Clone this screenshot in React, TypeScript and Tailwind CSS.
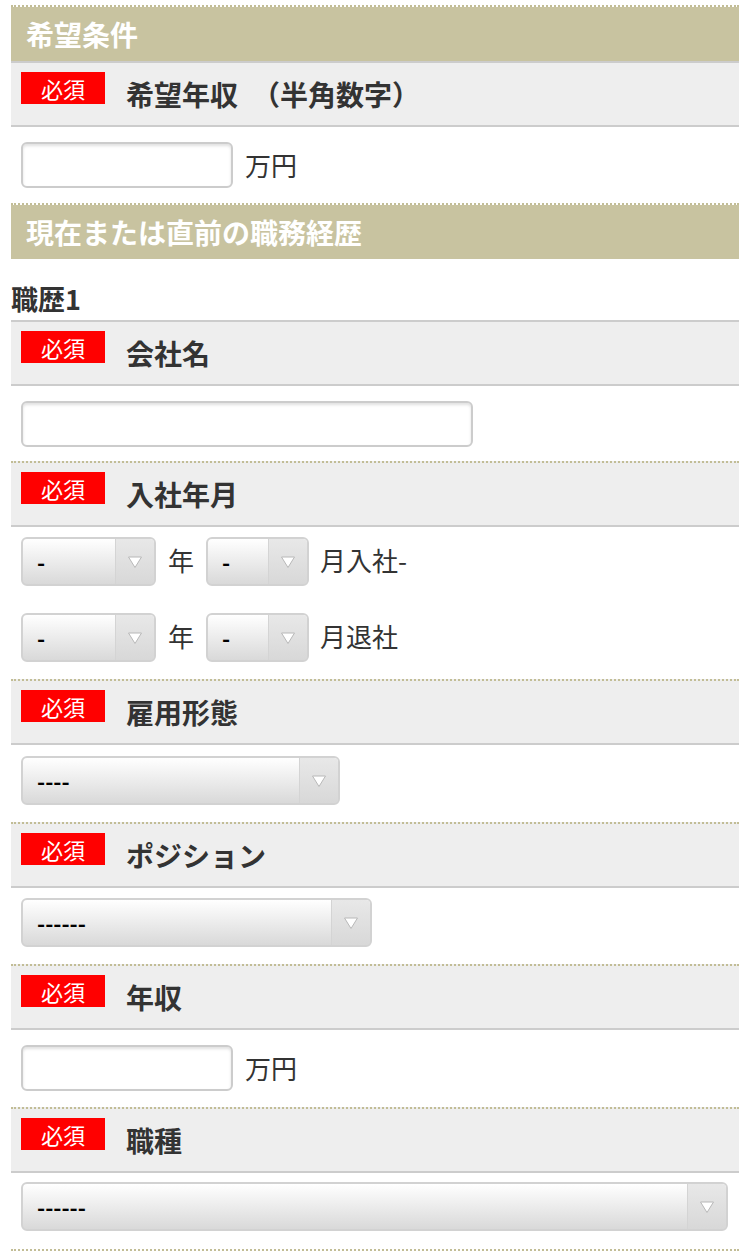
import React from 'react'

const font = "font-['Noto_Sans_CJK_JP','Noto_Sans',sans-serif]"

function SectionHeader({ title }: { title: string }) {
  return (
    <div className="border-t-2 border-dotted border-[#c2bd96]">
      <h2 className="h-[54px] bg-[#c8c3a0] pl-[15px] text-[28px] font-bold leading-[54px] text-white">
        {title}
      </h2>
    </div>
  )
}

function FieldLabel({ label, first }: { label: string; first?: boolean }) {
  return (
    <div
      className={
        first
          ? 'flex h-[66px] items-start gap-[21px] border-t-2 border-b-2 border-t-[#cccccc] border-b-[#cccccc] bg-[#eeeeee] pl-[10px] pt-[9px]'
          : 'flex h-[66px] items-start gap-[21px] border-t-2 border-b-2 border-dotted border-t-[#c2bd96] border-b-[#cccccc] bg-[#eeeeee] pl-[10px] pt-[9px]'
      }
      style={first ? undefined : { borderBottomStyle: 'solid' }}
    >
      <span className="flex h-[32px] w-[84px] items-center justify-center bg-[#ff0000] text-[22px] leading-none text-white">
        必須
      </span>
      <span className="mt-[4px] text-[28px] font-bold leading-[36px] text-[#333333]">{label}</span>
    </div>
  )
}

function TextInput({ width }: { width: string }) {
  return (
    <input
      type="text"
      className={`h-[46px] ${width} rounded-[6px] border-2 border-[#cccccc] bg-white shadow-[inset_0_2px_3px_rgba(0,0,0,0.12)] outline-none`}
    />
  )
}

function SelectBox({ width, value }: { width: string; value: string }) {
  return (
    <div
      className={`flex h-[49px] ${width} overflow-hidden rounded-[6px] border-2 border-[#d2d2d2] bg-linear-to-b from-white to-[#d9d9d9]`}
    >
      <div className="flex flex-1 items-center pl-[14px] text-[22px] font-bold text-black">{value}</div>
      <div className="flex w-[39px] items-center justify-center border-l border-[#d4d4d4] bg-linear-to-b from-[#e8e8e8] to-[#d8d8d8]">
        <svg width="16" height="14" viewBox="0 0 16 14">
          <path d="M1.5 2 L14.5 2 L8 12.5 Z" fill="#ffffff" stroke="#b8b8b8" strokeWidth="1" strokeLinejoin="round" />
        </svg>
      </div>
    </div>
  )
}

function Unit({ children }: { children: React.ReactNode }) {
  return <span className="text-[26px] leading-none text-[#333333]">{children}</span>
}

export default function App() {
  return (
    <div className={`${font} w-[750px] bg-white px-[11px] pt-[5px] text-[#333333]`}>
      <SectionHeader title="希望条件" />
      <FieldLabel first label="希望年収　（半角数字）" />
      <div className="flex items-center gap-[12px] pl-[10px] pt-[15px] pb-[15px]">
        <TextInput width="w-[212px]" />
        <Unit>万円</Unit>
      </div>

      <SectionHeader title="現在または直前の職務経歴" />
      <h3 className="pt-[25px] pb-[7px] text-[27px] font-bold leading-[29px] text-[#333333]">職歴1</h3>

      <FieldLabel first label="会社名" />
      <div className="pl-[10px] pt-[15px] pb-[14px]">
        <TextInput width="w-[452px]" />
      </div>

      <FieldLabel label="入社年月" />
      <div className="flex flex-col gap-[27px] pl-[10px] pt-[10px] pb-[17px]">
        <div className="flex items-center">
          <SelectBox width="w-[135px]" value="-" />
          <span className="mx-[12px]">
            <Unit>年</Unit>
          </span>
          <SelectBox width="w-[103px]" value="-" />
          <span className="ml-[11px]">
            <Unit>月入社-</Unit>
          </span>
        </div>
        <div className="flex items-center">
          <SelectBox width="w-[135px]" value="-" />
          <span className="mx-[12px]">
            <Unit>年</Unit>
          </span>
          <SelectBox width="w-[103px]" value="-" />
          <span className="ml-[11px]">
            <Unit>月退社</Unit>
          </span>
        </div>
      </div>

      <FieldLabel label="雇用形態" />
      <div className="pl-[10px] pt-[11px] pb-[17px]">
        <SelectBox width="w-[319px]" value="----" />
      </div>

      <FieldLabel label="ポジション" />
      <div className="pl-[10px] pt-[10px] pb-[17px]">
        <SelectBox width="w-[351px]" value="------" />
      </div>

      <FieldLabel label="年収" />
      <div className="flex items-center gap-[12px] pl-[10px] pt-[15px] pb-[16px]">
        <TextInput width="w-[212px]" />
        <Unit>万円</Unit>
      </div>

      <FieldLabel label="職種" />
      <div className="pl-[10px] pt-[9px] pb-[18px]">
        <SelectBox width="w-[707px]" value="------" />
      </div>
      <div className="border-t-2 border-dotted border-[#c2bd96]" />
    </div>
  )
}
